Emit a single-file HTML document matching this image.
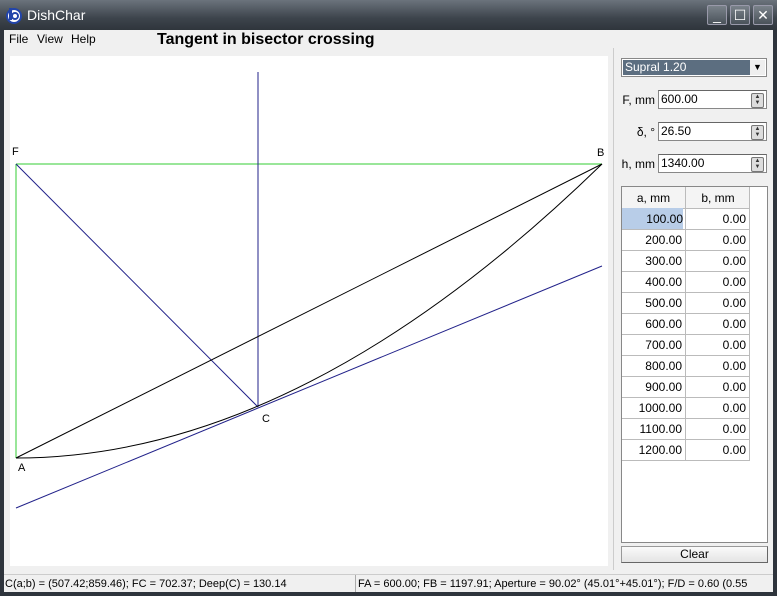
<!DOCTYPE html>
<html><head><style>
body{margin:0;width:777px;height:596px;overflow:hidden;font-family:"Liberation Sans",sans-serif;font-size:11px;background:#333;}
.win{position:absolute;left:0;top:0;width:777px;height:596px;background:linear-gradient(#5a6068,#2e343c 30px,#2e343c);}
.title{position:absolute;left:0;top:0;width:777px;height:30px;background:linear-gradient(#6b737c,#3d444c 60%,#2f353c);}
.title span{position:absolute;left:27px;top:7px;color:#fff;font-size:14px;}
.client{position:absolute;left:4px;top:30px;width:769px;height:562px;background:#f0f0f0;}
.abs{position:absolute;}
.menu span{position:absolute;top:2px;font-size:12px;}
.tb{position:absolute;top:5px;width:18px;height:18px;border:1px solid #99a;border-radius:2px;background:linear-gradient(#7a828a,#4a525a);color:#fff;text-align:center;font-size:14px;line-height:18px;}
.inp{position:absolute;left:658px;width:109px;height:19px;background:#fff;border:1px solid #888;border-top-color:#666;box-sizing:border-box;font-size:12px;padding:1px 2px;}
.spin{position:absolute;right:2px;top:2px;width:11px;height:13px;border:1px solid #777;border-radius:2px;background:#ddd;font-size:6px;line-height:6px;text-align:center;color:#333;}
.lbl{position:absolute;font-size:12px;text-align:right;width:42px;left:613px;}
.grid{position:absolute;left:621px;top:186px;width:147px;height:357px;background:#fff;border:1px solid #888;box-sizing:border-box;}
.row{position:absolute;left:0;width:128px;height:21px;border-bottom:1px solid #bbb;font-size:12px;}
.row div{position:absolute;top:4px;text-align:right;}
</style></head><body>
<div class="win">
<div class="title">
<svg class="abs" style="left:5px;top:6px" width="18" height="18"><circle cx="9" cy="10" r="7" fill="#fff" stroke="#24a" stroke-width="2"/><rect x="4" y="2" width="3" height="12" fill="#24a"/><circle cx="10" cy="10" r="3" fill="none" stroke="#24a" stroke-width="2"/></svg>
<span>DishChar</span>
<div class="tb" style="left:707px">_</div><div class="tb" style="left:730px">☐</div><div class="tb" style="left:753px">✕</div>
</div>
<div class="client">
<div class="menu"><span style="left:5px">File</span><span style="left:33px">View</span><span style="left:67px">Help</span></div>
<div class="abs" style="left:153px;top:1px;font-size:16px;font-weight:bold">Tangent in bisector crossing</div>
</div>
<div class="abs" style="left:10px;top:56px;width:598px;height:510px;background:#fff"></div>
<svg class="abs" style="left:0;top:0" width="777" height="596">
<g fill="none" stroke-width="1">
<path d="M16 164H602M16 164V458" stroke="#3c3"/>
<path d="M16 164L258 407M258 72V407M16 508L602 266" stroke="#22228a"/>
<path d="M16 458L602 164" stroke="#000"/>
<path d="M16 458Q300 458 602 164" stroke="#000"/>
</g>
<g font-size="11" font-family="Liberation Sans">
<text x="12" y="155">F</text><text x="597" y="156">B</text><text x="18" y="471">A</text><text x="262" y="422">C</text>
</g>
</svg>
<div class="abs" style="left:613px;top:48px;width:1px;height:522px;background:#ccc"></div>
<div class="abs" style="left:621px;top:58px;width:146px;height:19px;border:1px solid #888;background:#fff;box-sizing:border-box">
<div class="abs" style="left:1px;top:1px;width:126px;height:15px;background:#5c6e80;color:#fff;font-size:12px;padding-left:2px">Supral 1.20</div>
<div class="abs" style="right:1px;top:1px;width:15px;height:15px;background:#eee;font-size:9px;text-align:center;line-height:15px">▼</div>
</div>
<div class="lbl" style="top:93px">F, mm</div><div class="inp" style="top:90px">600.00<div class="spin">▲<br>▼</div></div>
<div class="lbl" style="top:125px">δ, °</div><div class="inp" style="top:122px">26.50<div class="spin">▲<br>▼</div></div>
<div class="lbl" style="top:157px">h, mm</div><div class="inp" style="top:154px">1340.00<div class="spin">▲<br>▼</div></div>
<div class="grid">
<div class="row" style="top:0;background:#f4f4f4"><div style="left:0;width:63px;text-align:center">a, mm</div><div style="left:64px;width:64px;text-align:center">b, mm</div></div>
<div class="abs" style="left:63px;top:0;width:1px;height:273px;background:#bbb"></div>
<div class="abs" style="left:127px;top:0;width:1px;height:273px;background:#bbb"></div>
<div class="row" style="top:21px"><div style="left:0;background:#b8cde8;top:0;height:17px;padding-top:4px;width:61px">100.00</div><div style="left:64px;width:60px">0.00</div></div>
<div class="row" style="top:42px"><div style="width:60px">200.00</div><div style="left:64px;width:60px">0.00</div></div>
<div class="row" style="top:63px"><div style="width:60px">300.00</div><div style="left:64px;width:60px">0.00</div></div>
<div class="row" style="top:84px"><div style="width:60px">400.00</div><div style="left:64px;width:60px">0.00</div></div>
<div class="row" style="top:105px"><div style="width:60px">500.00</div><div style="left:64px;width:60px">0.00</div></div>
<div class="row" style="top:126px"><div style="width:60px">600.00</div><div style="left:64px;width:60px">0.00</div></div>
<div class="row" style="top:147px"><div style="width:60px">700.00</div><div style="left:64px;width:60px">0.00</div></div>
<div class="row" style="top:168px"><div style="width:60px">800.00</div><div style="left:64px;width:60px">0.00</div></div>
<div class="row" style="top:189px"><div style="width:60px">900.00</div><div style="left:64px;width:60px">0.00</div></div>
<div class="row" style="top:210px"><div style="width:60px">1000.00</div><div style="left:64px;width:60px">0.00</div></div>
<div class="row" style="top:231px"><div style="width:60px">1100.00</div><div style="left:64px;width:60px">0.00</div></div>
<div class="row" style="top:252px"><div style="width:60px">1200.00</div><div style="left:64px;width:60px">0.00</div></div>
</div>
<div class="abs" style="left:621px;top:546px;width:147px;height:17px;border:1px solid #999;border-right-color:#666;border-bottom-color:#666;background:linear-gradient(#fafafa,#e4e4e4);box-sizing:border-box;text-align:center;font-size:12px;line-height:15px">Clear</div>
<div class="abs" style="left:4px;top:574px;width:769px;height:1px;background:#ccc"></div>
<div class="abs" style="left:5px;top:578px;font-size:11px;white-space:nowrap">C(a;b) = (507.42;859.46); FC = 702.37; Deep(C) = 130.14</div>
<div class="abs" style="left:355px;top:575px;width:1px;height:17px;background:#aaa"></div>
<div class="abs" style="left:358px;top:578px;width:415px;overflow:hidden;font-size:11px;white-space:nowrap">FA = 600.00; FB = 1197.91; Aperture = 90.02° (45.01°+45.01°); F/D = 0.60 (0.55</div>
</div>
</body></html>
